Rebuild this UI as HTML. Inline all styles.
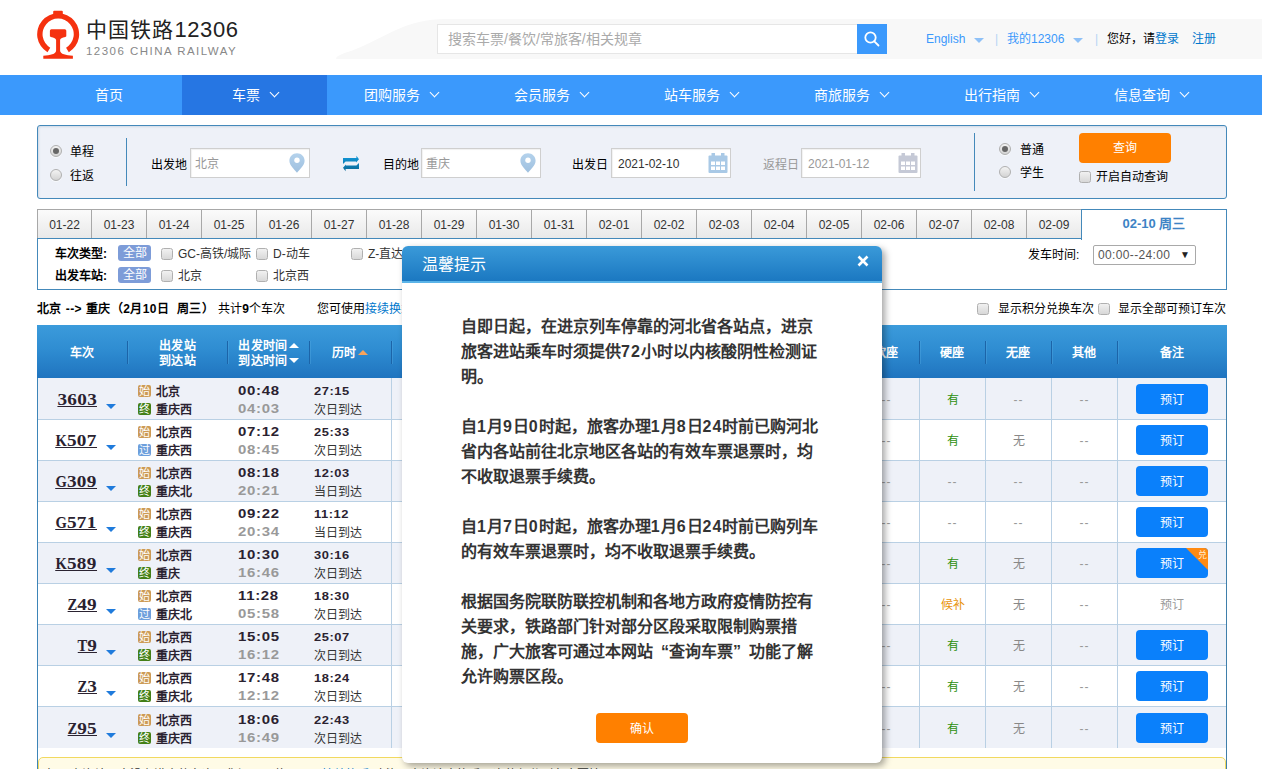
<!DOCTYPE html>
<html lang="zh-CN">
<head>
<meta charset="utf-8">
<title>中国铁路12306</title>
<style>
*{box-sizing:border-box;margin:0;padding:0}
html,body{width:1262px;height:769px;overflow:hidden;background:#fff}
body{font-family:"Liberation Sans",sans-serif;font-size:12px;color:#000;position:relative}
a{text-decoration:none;color:#0077cc}
.abs{position:absolute}
/* header */
#hdbg{position:absolute;left:336px;top:19px;width:926px;height:40px}
#logo{position:absolute;left:30px;top:5px;width:60px;height:60px}
#lt1{position:absolute;left:86px;top:15px;font-size:22px;line-height:30px;color:#222;white-space:nowrap;letter-spacing:0px}
#lt2{position:absolute;left:86px;top:44px;font-size:11.5px;line-height:14px;color:#888;white-space:nowrap;letter-spacing:1.47px}
#sinp{position:absolute;left:437px;top:24px;width:421px;height:30px;border:1px solid #e6e6e6;background:#fff;color:#aaa;font-size:14px;line-height:28px;padding-left:10px;white-space:nowrap}
#sbtn{position:absolute;left:857px;top:24px;width:30px;height:30px;background:#3b99fc}
.hl{position:absolute;top:31px;font-size:12px;line-height:16px;white-space:nowrap;color:#3b99fc}
.caret{display:inline-block;width:0;height:0;border-left:5px solid transparent;border-right:5px solid transparent;border-top:5px solid #8fc1f7;vertical-align:middle;margin-left:9px;position:relative;top:1px}
/* nav */
#nav{position:absolute;left:0;top:75px;width:1262px;height:40px;background:#3b99fc}
.ni{position:absolute;top:0;height:40px;line-height:40px;color:#fff;font-size:14px;font-weight:500;text-align:center;white-space:nowrap}
.ni.on{background:#2676e3}
.chev{display:inline-block;width:7px;height:7px;border-right:1.7px solid #fff;border-bottom:1.7px solid #fff;transform:rotate(45deg);margin-left:11px;position:relative;top:-4px}

/* search */
#sbox{position:absolute;left:37px;top:125px;width:1190px;height:74px;border:1px solid #4489ba;border-radius:3px;background:#eef1f8;box-shadow:inset 1px 1px 2px rgba(120,150,180,.25)}
.vl{position:absolute;width:1px;background:#4489ba}
.radio{position:absolute;width:12px;height:12px;border-radius:50%;border:1px solid #b0b0b0;background:linear-gradient(#f3f3f3,#d3d3d3);box-shadow:0 1px 0 rgba(255,255,255,.6)}
.radio.on::after{content:"";position:absolute;left:2px;top:2px;width:6px;height:6px;border-radius:50%;background:#666}
.cb{position:absolute;width:12px;height:12px;margin-top:.5px;border-radius:2.5px;border:1px solid #b0b0b0;background:linear-gradient(#f1f1f1,#d8d8d8)}
.lb{position:absolute;font-size:12px;line-height:16px;white-space:nowrap;color:#000;font-weight:500;margin-top:1px}
.inp{position:absolute;top:148px;width:120px;height:30px;border:1px solid #cfcfcf;background:#fff;box-shadow:inset 1px 1px 1px rgba(0,0,0,.06);font-size:12px;line-height:30px;padding-left:6px;color:#999;white-space:nowrap}
#qbtn{position:absolute;left:1079px;top:133px;width:92px;height:30px;border-radius:4px;background:#ff8000;color:#fff;font-size:12px;line-height:30px;text-align:center}
/* tabs */
.tab{position:absolute;top:209px;width:56px;height:30px;border:1px solid #a8a8a8;border-bottom:1px solid #4489ba;background:linear-gradient(#fbfbfb,#e9e9e9);font-size:12px;line-height:31px;text-align:center;color:#333}
#tabon{position:absolute;left:1081px;top:209px;width:146px;height:31px;border:1px solid #4489ba;border-bottom:none;background:#fff;font-size:13px;font-weight:bold;line-height:28px;text-align:center;color:#3d83c5;z-index:2}
#fbox{position:absolute;left:37px;top:238px;width:1190px;height:52px;border:1px solid #4489ba;background:#fff}
.badge{position:absolute;left:118px;width:33px;height:16px;border-radius:3px;background:#7d9cd8;color:#fff;font-size:12px;line-height:16px;text-align:center}
#sel{position:absolute;left:1093px;top:245px;width:103px;height:20px;border:1px solid #a9a9a9;border-radius:2px;background:#fff;font-size:12px;line-height:18px;padding-left:4px;color:#555;letter-spacing:.35px;white-space:nowrap}

/* table */
#wrapL{position:absolute;left:37px;top:325px;width:1px;height:444px;background:#3d85b8}
#wrapR{position:absolute;left:1226px;top:325px;width:1px;height:444px;background:#3f7fab}
#th{position:absolute;left:37px;top:325px;width:1190px;height:53px;background:linear-gradient(#3b9bdb 0%,#2f8dd2 45%,#1f74bf 100%)}
.thc{position:absolute;top:0;height:53px;color:#fff;font-weight:bold;font-size:12px;letter-spacing:.3px;text-align:center;white-space:nowrap;display:flex;align-items:center;justify-content:center;line-height:15px;padding-top:4px}
.ths{position:absolute;top:16px;width:2px;height:23px;border-left:1px solid #1c64a8;border-right:1px solid rgba(90,175,230,.35)}
.row{position:absolute;left:38px;width:1188px;height:41px;border-bottom:1px solid #b9d0e4;background:#fff}
.row.odd{background:#eef1f8}
.tn{position:absolute;right:1129px;bottom:12px;font-family:"Liberation Serif",serif;font-weight:bold;font-size:17px;line-height:14px;height:14.5px;letter-spacing:.3px;color:#2a2230;text-decoration:none;border-bottom:1.5px solid #2a2230;white-space:nowrap;transform:scaleX(1.13);transform-origin:100% 50%}
.tn span{display:inline-block;transform:scaleX(.76);transform-origin:100% 50%;margin-left:-3.2px}
.tri{position:absolute;left:68px;bottom:10px;width:0;height:0;border-left:5px solid transparent;border-right:5px solid transparent;border-top:5px solid #1f7bdc}
.si{position:absolute;left:100px;width:13px;height:12px;border-radius:2px;color:#fff;font-size:11px;line-height:12px;text-align:center;overflow:hidden}
.si.s{background:#cc9a55}.si.z{background:#437f17}.si.g{background:#6d9fdc}
.sn{position:absolute;left:118px;font-size:12px;font-weight:bold;line-height:16px;color:#2a2230;white-space:nowrap}
.t1{position:absolute;left:200px;bottom:19px;font-size:13px;font-weight:bold;line-height:18px;letter-spacing:.6px;transform:scaleX(1.15);transform-origin:0 50%;color:#2a2230;white-space:nowrap}
.t2{position:absolute;left:200px;bottom:1px;font-size:13px;font-weight:bold;line-height:18px;letter-spacing:.6px;transform:scaleX(1.15);transform-origin:0 50%;color:#999;white-space:nowrap}
.d1{position:absolute;left:276px;bottom:20px;font-size:11.5px;font-weight:bold;line-height:16px;letter-spacing:.5px;transform:scaleX(1.12);transform-origin:0 50%;color:#2a2230;white-space:nowrap}
.d2{position:absolute;left:275.5px;bottom:1px;font-size:12px;line-height:16px;color:#333;white-space:nowrap}
.c{position:absolute;bottom:0;width:66px;height:41px;border-left:1px solid #b9d0e4;text-align:center;font-size:12px;line-height:44px;color:#999;letter-spacing:1px;white-space:nowrap}
.c.y{color:#2c8f0c;letter-spacing:0}.c.h{color:#e8930c;letter-spacing:0}.c.n{color:#888;letter-spacing:0}
.bk{position:absolute;left:1098px;bottom:5px;width:72px;height:30px;border-radius:4px;background:#0a80fb;color:#fff;font-size:12px;line-height:32px;text-align:center;overflow:hidden}
.bkx{position:absolute;left:1098px;bottom:5px;width:72px;height:30px;color:#999;font-size:12px;line-height:32px;text-align:center}
#tip{position:absolute;left:38px;top:757px;width:1188px;height:40px;border:1px solid #f1d95f;border-radius:5px;background:#fffbe6;font-size:12px;line-height:16px;padding:9px 0 0 7px;color:#333;white-space:nowrap}
/* modal */
#modal{position:absolute;left:402px;top:246px;width:480px;height:517px;border-radius:6px;background:#fff;box-shadow:3px 3px 7px rgba(0,0,0,.36);z-index:10}
#mh{position:absolute;left:0;top:0;width:480px;height:37px;border-radius:6px 6px 0 0;background:linear-gradient(#3a9ad9,#1b78c1);border-bottom:2px solid #5bb4e8;color:#fff;font-size:16px;line-height:37px;padding-left:20px;font-weight:300}
#mx{position:absolute;left:455px;top:9px}
#mb{position:absolute;left:59px;top:68px;width:400px;font-size:16px;font-weight:bold;line-height:25px;color:#333;white-space:nowrap}
#mb p{margin-bottom:25px}
.dg{letter-spacing:1px}
.q{display:inline-block;width:16px;text-align:left}
#ok{position:absolute;left:194px;top:467px;width:92px;height:30px;border-radius:4px;background:#ff8000;color:#fff;font-size:12px;line-height:33px;text-align:center}
.up,.dn{display:inline-block;width:0;height:0;border-left:5px solid transparent;border-right:5px solid transparent;margin-left:1px;vertical-align:middle;position:relative;top:-1px}
.up{border-bottom:5px solid #fff}.dn{border-top:5px solid #fff}.up.o{border-bottom-color:#f9a35a}
</style>
</head>
<body>
<svg width="0" height="0" style="position:absolute"><defs><linearGradient id="pg" x1="0" y1="0" x2="0" y2="1"><stop offset="0" stop-color="#b4d2ec"/><stop offset="1" stop-color="#9fc0df"/></linearGradient></defs></svg>
<!-- header -->
<svg id="hdbg" viewBox="0 0 926 40" preserveAspectRatio="none"><path d="M0 40 C 0 36, 10 34, 20 30 C 50 18, 70 0, 110 0 L 926 0 L 926 40 Z" fill="#f8f8f8"/></svg>
<svg id="logo" viewBox="30 5 60 60"><path d="M47.49 52.29 A21.0 21.0 0 1 1 68.81 52.29 L66.07 47.64 A15.6 15.6 0 1 0 50.23 47.64 Z" fill="#f5310f"/><rect x="53.2" y="10.8" width="9.6" height="4" rx="1" fill="#f5310f"/><path d="M51.4 29.2 H64.8 Q66.3 29.2 66.3 30.7 V36.2 C66.3 37.2 60.1 37.6 60.1 40 V50.5 C60.1 54.2 66 55.2 72.9 55.8 V58.8 H43.3 V55.8 C50.2 55.2 56.1 54.2 56.1 50.5 V40 C56.1 37.6 49.9 37.2 49.9 36.2 V30.7 Q49.9 29.2 51.4 29.2 Z" fill="#f5310f"/></svg>
<div id="lt1"><span style="font-weight:500;font-size:21px;letter-spacing:1.1px">中国铁路</span><span style="letter-spacing:0.6px">12306</span></div>
<div id="lt2">12306 CHINA RAILWAY</div>
<div id="sinp">搜索车票/餐饮/常旅客/相关规章</div>
<div id="sbtn"><svg width="30" height="30" viewBox="0 0 30 30"><circle cx="13.500000" cy="13.500000" r="5.200000" fill="none" stroke="#fff" stroke-width="1.800000"/><path d="M17.300000 17.300000 L21.500000 21.500000" stroke="#fff" stroke-width="1.800000" stroke-linecap="round"/></svg></div>
<div class="hl" style="left:926px">English<span class="caret"></span></div>
<div class="hl" style="left:995px;color:#b5d4f5">|</div>
<div class="hl" style="left:1007px">我的12306<span class="caret"></span></div>
<div class="hl" style="left:1095px;color:#b5d4f5">|</div>
<div class="hl" style="left:1107px;color:#000">您好，请<a href="#" style="color:#0077cc">登录</a></div>
<div class="hl" style="left:1192px"><a href="#" style="color:#0077cc">注册</a></div>
<!-- nav -->
<div id="nav">
<div class="ni" style="left:37px;width:144px">首页</div>
<div class="ni on" style="left:182px;width:145px">车票<span class="chev"></span></div>
<div class="ni" style="left:326px;width:150px">团购服务<span class="chev"></span></div>
<div class="ni" style="left:476px;width:150px">会员服务<span class="chev"></span></div>
<div class="ni" style="left:626px;width:150px">站车服务<span class="chev"></span></div>
<div class="ni" style="left:776px;width:150px">商旅服务<span class="chev"></span></div>
<div class="ni" style="left:926px;width:150px">出行指南<span class="chev"></span></div>
<div class="ni" style="left:1076px;width:150px">信息查询<span class="chev"></span></div>
</div>

<div id="sbox"></div>
<div class="radio on" style="left:50px;top:145px"></div><div class="lb" style="left:70px;top:143px">单程</div>
<div class="radio" style="left:50px;top:169px"></div><div class="lb" style="left:70px;top:167px">往返</div>
<div class="vl" style="left:126px;top:138px;height:48px"></div>
<div class="lb" style="left:151px;top:156px">出发地</div>
<div class="inp" style="left:190px;padding-left:4px">北京</div><svg class="abs" style="left:289px;top:153px" width="16" height="20" viewBox="0 0 16 20"><path d="M8 0.3 C3.700000 0.3 0.4 3.600000 0.4 7.700000 C0.4 12.500000 5.500000 16.500000 8 19.700000 C10.500000 16.500000 15.600000 12.500000 15.600000 7.700000 C15.600000 3.600000 12.300000 0.3 8 0.3 Z" fill="url(#pg)"/><circle cx="8" cy="7.300000" r="2.700000" fill="#fff"/></svg>
<svg class="abs" style="left:342px;top:155px" width="18" height="17" viewBox="0 0 18 17"><defs><linearGradient id="sw" x1="0" y1="0" x2="0" y2="1"><stop offset="0" stop-color="#1299da"/><stop offset="1" stop-color="#0a6997"/></linearGradient></defs><path d="M1 3 V9 L3.6 6.4 H14 V7.4 L17 4.3 L14.4 0.8 V3 Z M17 14 V8 L14.4 10.6 H4 V9.6 L1 12.7 L3.6 16.2 V14 Z" fill="url(#sw)"/></svg>
<div class="lb" style="left:383px;top:156px">目的地</div>
<div class="inp" style="left:421px;padding-left:4px">重庆</div><svg class="abs" style="left:520px;top:153px" width="16" height="20" viewBox="0 0 16 20"><path d="M8 0.3 C3.700000 0.3 0.4 3.600000 0.4 7.700000 C0.4 12.500000 5.500000 16.500000 8 19.700000 C10.500000 16.500000 15.600000 12.500000 15.600000 7.700000 C15.600000 3.600000 12.300000 0.3 8 0.3 Z" fill="url(#pg)"/><circle cx="8" cy="7.300000" r="2.700000" fill="#fff"/></svg>
<div class="lb" style="left:572px;top:156px">出发日</div>
<div class="inp" style="left:611px;color:#333">2021-02-10</div><svg class="abs" style="left:708px;top:153px" width="20" height="20" viewBox="0 0 20 20"><rect x="0.5" y="2.5" width="19" height="17.5" rx="1" fill="#a9c9e6"/><rect x="3.5" y="0" width="3.5" height="5" fill="#a9c9e6"/><rect x="13" y="0" width="3.5" height="5" fill="#a9c9e6"/><g fill="#fff"><rect x="3" y="8.500000" width="4" height="3.500000"/><rect x="8" y="8.500000" width="4" height="3.500000"/><rect x="13" y="8.500000" width="4" height="3.500000"/><rect x="3" y="13.500000" width="4" height="3.500000"/><rect x="8" y="13.500000" width="4" height="3.500000"/><rect x="13" y="13.500000" width="4" height="3.500000"/></g></svg>
<div class="lb" style="left:763px;top:156px;color:#999;font-weight:normal">返程日</div>
<div class="inp" style="left:801px">2021-01-12</div><svg class="abs" style="left:898px;top:153px" width="20" height="20" viewBox="0 0 20 20"><rect x="0.5" y="2.5" width="19" height="17.5" rx="1" fill="#c5c9d6"/><rect x="3.5" y="0" width="3.5" height="5" fill="#c5c9d6"/><rect x="13" y="0" width="3.5" height="5" fill="#c5c9d6"/><g fill="#fff"><rect x="3" y="8.500000" width="4" height="3.500000"/><rect x="8" y="8.500000" width="4" height="3.500000"/><rect x="13" y="8.500000" width="4" height="3.500000"/><rect x="3" y="13.500000" width="4" height="3.500000"/><rect x="8" y="13.500000" width="4" height="3.500000"/><rect x="13" y="13.500000" width="4" height="3.500000"/></g></svg>
<div class="vl" style="left:974px;top:133px;height:58px"></div>
<div class="radio on" style="left:999px;top:143px"></div><div class="lb" style="left:1020px;top:141px">普通</div>
<div class="radio" style="left:999px;top:166px"></div><div class="lb" style="left:1020px;top:164px">学生</div>
<div id="qbtn">查询</div>
<div class="cb" style="left:1079px;top:170px"></div><div class="lb" style="left:1096px;top:168px">开启自动查询</div>

<div class="tab" style="left:37px;width:55px">01-22</div><div class="tab" style="left:91px">01-23</div><div class="tab" style="left:146px">01-24</div><div class="tab" style="left:201px">01-25</div><div class="tab" style="left:256px">01-26</div><div class="tab" style="left:311px">01-27</div><div class="tab" style="left:366px">01-28</div><div class="tab" style="left:421px">01-29</div><div class="tab" style="left:476px">01-30</div><div class="tab" style="left:531px">01-31</div><div class="tab" style="left:586px">02-01</div><div class="tab" style="left:641px">02-02</div><div class="tab" style="left:696px">02-03</div><div class="tab" style="left:751px">02-04</div><div class="tab" style="left:806px">02-05</div><div class="tab" style="left:861px">02-06</div><div class="tab" style="left:916px">02-07</div><div class="tab" style="left:971px">02-08</div><div class="tab" style="left:1026px">02-09</div><div id="tabon">02-10 周三</div>
<div id="fbox"></div>
<div class="lb" style="left:55px;top:245px;font-weight:bold">车次类型:</div><div class="badge" style="top:245px">全部</div>
<div class="cb" style="left:161px;top:247px"></div><div class="lb" style="left:178px;top:245px;color:#333">GC-高铁/城际</div>
<div class="cb" style="left:256px;top:247px"></div><div class="lb" style="left:273px;top:245px;color:#333">D-动车</div>
<div class="cb" style="left:351px;top:247px"></div><div class="lb" style="left:368px;top:245px;color:#333">Z-直达</div>
<div class="cb" style="left:446px;top:247px"></div><div class="lb" style="left:463px;top:245px;color:#333">T-特快</div>
<div class="cb" style="left:541px;top:247px"></div><div class="lb" style="left:558px;top:245px;color:#333">K-快速</div>
<div class="cb" style="left:636px;top:247px"></div><div class="lb" style="left:653px;top:245px;color:#333">其他</div>
<div class="lb" style="left:55px;top:267px;font-weight:bold">出发车站:</div><div class="badge" style="top:267px">全部</div>
<div class="cb" style="left:161px;top:269px"></div><div class="lb" style="left:178px;top:267px;color:#333">北京</div>
<div class="cb" style="left:256px;top:269px"></div><div class="lb" style="left:273px;top:267px;color:#333">北京西</div>
<div class="lb" style="left:1028px;top:246px">发车时间:</div>
<div id="sel">00:00--24:00<span style="position:absolute;right:5px;top:0;font-size:10px;letter-spacing:0;color:#222">&#9660;</span></div>
<div class="lb" style="left:37px;top:300px"><b style="letter-spacing:.45px;margin-right:4px">北京 --&gt; 重庆（2月10日&nbsp; 周三）</b>共计<b>9</b>个车次</div>
<div class="lb" style="left:317px;top:300px">您可使用<a href="#">接续换乘</a>功能，查询途中换乘一次的部分列车余票情况。</div>
<div class="cb" style="left:977px;top:302px"></div><div class="lb" style="left:998px;top:300px">显示积分兑换车次</div>
<div class="cb" style="left:1098px;top:302px"></div><div class="lb" style="left:1118px;top:300px">显示全部可预订车次</div>

<div id="wrapL"></div><div id="wrapR"></div><div id="th"><div class="thc" style="left:0px;width:90px"><div>车次</div></div><div class="thc" style="left:90px;width:101px"><div>出发站<br>到达站</div></div><div class="thc" style="left:191px;width:81px"><div>出发时间<span class="up"></span><br>到达时间<span class="dn"></span></div></div><div class="thc" style="left:272px;width:82px"><div>历时<span class="up o"></span></div></div><div class="thc" style="left:354px;width:66px"><div>商务座<br>特等座</div></div><div class="thc" style="left:420px;width:66px"><div>一等座</div></div><div class="thc" style="left:486px;width:66px"><div>二等座<br>二等包座</div></div><div class="thc" style="left:552px;width:66px"><div>高级<br>软卧</div></div><div class="thc" style="left:618px;width:66px"><div>软卧<br>一等卧</div></div><div class="thc" style="left:684px;width:66px"><div>动卧</div></div><div class="thc" style="left:750px;width:66px"><div>硬卧<br>二等卧</div></div><div class="thc" style="left:816px;width:66px"><div>软座</div></div><div class="thc" style="left:882px;width:66px"><div>硬座</div></div><div class="thc" style="left:948px;width:66px"><div>无座</div></div><div class="thc" style="left:1014px;width:66px"><div>其他</div></div><div class="thc" style="left:1080px;width:110px"><div>备注</div></div><div class="ths" style="left:90px"></div><div class="ths" style="left:190px"></div><div class="ths" style="left:272px"></div><div class="ths" style="left:354px"></div><div class="ths" style="left:420px"></div><div class="ths" style="left:486px"></div><div class="ths" style="left:552px"></div><div class="ths" style="left:618px"></div><div class="ths" style="left:684px"></div><div class="ths" style="left:750px"></div><div class="ths" style="left:816px"></div><div class="ths" style="left:882px"></div><div class="ths" style="left:948px"></div><div class="ths" style="left:1014px"></div><div class="ths" style="left:1080px"></div></div><div class="row odd" style="top:378px;height:42px"><a class="tn" href="#">3603</a><span class="tri"></span><span class="si s" style="bottom:22px">始</span><span class="sn" style="bottom:19px">北京</span><span class="si z" style="bottom:4px">终</span><span class="sn" style="bottom:1px">重庆西</span><span class="t1">00:48</span><span class="t2">04:03</span><span class="d1">27:15</span><span class="d2">次日到达</span><span class="c" style="left:353px">--</span><span class="c" style="left:419px">--</span><span class="c" style="left:485px">--</span><span class="c" style="left:551px">--</span><span class="c y" style="left:617px">有</span><span class="c" style="left:683px">--</span><span class="c y" style="left:749px">有</span><span class="c" style="left:815px">--</span><span class="c y" style="left:881px">有</span><span class="c" style="left:947px">--</span><span class="c" style="left:1013px">--</span><span class="c" style="left:1079px;width:2px"></span><a class="bk" href="#">预订</a></div><div class="row" style="top:420px"><a class="tn" href="#"><span>K</span>507</a><span class="tri"></span><span class="si s" style="bottom:22px">始</span><span class="sn" style="bottom:19px">北京西</span><span class="si g" style="bottom:4px">过</span><span class="sn" style="bottom:1px">重庆西</span><span class="t1">07:12</span><span class="t2">08:45</span><span class="d1">25:33</span><span class="d2">次日到达</span><span class="c" style="left:353px">--</span><span class="c" style="left:419px">--</span><span class="c" style="left:485px">--</span><span class="c" style="left:551px">--</span><span class="c y" style="left:617px">有</span><span class="c" style="left:683px">--</span><span class="c y" style="left:749px">有</span><span class="c" style="left:815px">--</span><span class="c y" style="left:881px">有</span><span class="c n" style="left:947px">无</span><span class="c" style="left:1013px">--</span><span class="c" style="left:1079px;width:2px"></span><a class="bk" href="#">预订</a></div><div class="row odd" style="top:461px"><a class="tn" href="#"><span>G</span>309</a><span class="tri"></span><span class="si s" style="bottom:22px">始</span><span class="sn" style="bottom:19px">北京西</span><span class="si z" style="bottom:4px">终</span><span class="sn" style="bottom:1px">重庆北</span><span class="t1">08:18</span><span class="t2">20:21</span><span class="d1">12:03</span><span class="d2">当日到达</span><span class="c y" style="left:353px">5</span><span class="c y" style="left:419px">有</span><span class="c y" style="left:485px">有</span><span class="c" style="left:551px">--</span><span class="c" style="left:617px">--</span><span class="c" style="left:683px">--</span><span class="c" style="left:749px">--</span><span class="c" style="left:815px">--</span><span class="c" style="left:881px">--</span><span class="c" style="left:947px">--</span><span class="c" style="left:1013px">--</span><span class="c" style="left:1079px;width:2px"></span><a class="bk" href="#">预订</a></div><div class="row" style="top:502px"><a class="tn" href="#"><span>G</span>571</a><span class="tri"></span><span class="si s" style="bottom:22px">始</span><span class="sn" style="bottom:19px">北京西</span><span class="si z" style="bottom:4px">终</span><span class="sn" style="bottom:1px">重庆西</span><span class="t1">09:22</span><span class="t2">20:34</span><span class="d1">11:12</span><span class="d2">当日到达</span><span class="c y" style="left:353px">8</span><span class="c y" style="left:419px">有</span><span class="c y" style="left:485px">有</span><span class="c" style="left:551px">--</span><span class="c" style="left:617px">--</span><span class="c" style="left:683px">--</span><span class="c" style="left:749px">--</span><span class="c" style="left:815px">--</span><span class="c" style="left:881px">--</span><span class="c" style="left:947px">--</span><span class="c" style="left:1013px">--</span><span class="c" style="left:1079px;width:2px"></span><a class="bk" href="#">预订</a></div><div class="row odd" style="top:543px"><a class="tn" href="#"><span>K</span>589</a><span class="tri"></span><span class="si s" style="bottom:22px">始</span><span class="sn" style="bottom:19px">北京西</span><span class="si z" style="bottom:4px">终</span><span class="sn" style="bottom:1px">重庆</span><span class="t1">10:30</span><span class="t2">16:46</span><span class="d1">30:16</span><span class="d2">次日到达</span><span class="c" style="left:353px">--</span><span class="c" style="left:419px">--</span><span class="c" style="left:485px">--</span><span class="c" style="left:551px">--</span><span class="c y" style="left:617px">有</span><span class="c" style="left:683px">--</span><span class="c y" style="left:749px">有</span><span class="c" style="left:815px">--</span><span class="c y" style="left:881px">有</span><span class="c n" style="left:947px">无</span><span class="c" style="left:1013px">--</span><span class="c" style="left:1079px;width:2px"></span><a class="bk" href="#">预订<svg style="position:absolute;right:0;top:0" width="22" height="22" viewBox="0 0 22 22"><path d="M0 0 H22 V22 Z" fill="#ff8a12"/></svg><span style="position:absolute;right:1px;top:1px;font-size:9px;line-height:12px;color:#fff0d6">兑</span></a></div><div class="row" style="top:584px"><a class="tn" href="#"><span>Z</span>49</a><span class="tri"></span><span class="si s" style="bottom:22px">始</span><span class="sn" style="bottom:19px">北京西</span><span class="si g" style="bottom:4px">过</span><span class="sn" style="bottom:1px">重庆北</span><span class="t1">11:28</span><span class="t2">05:58</span><span class="d1">18:30</span><span class="d2">次日到达</span><span class="c" style="left:353px">--</span><span class="c" style="left:419px">--</span><span class="c" style="left:485px">--</span><span class="c" style="left:551px">--</span><span class="c h" style="left:617px">候补</span><span class="c" style="left:683px">--</span><span class="c h" style="left:749px">候补</span><span class="c" style="left:815px">--</span><span class="c h" style="left:881px">候补</span><span class="c n" style="left:947px">无</span><span class="c" style="left:1013px">--</span><span class="c" style="left:1079px;width:2px"></span><span class="bkx">预订</span></div><div class="row odd" style="top:625px"><a class="tn" href="#"><span>T</span>9</a><span class="tri"></span><span class="si s" style="bottom:22px">始</span><span class="sn" style="bottom:19px">北京西</span><span class="si z" style="bottom:4px">终</span><span class="sn" style="bottom:1px">重庆西</span><span class="t1">15:05</span><span class="t2">16:12</span><span class="d1">25:07</span><span class="d2">次日到达</span><span class="c" style="left:353px">--</span><span class="c" style="left:419px">--</span><span class="c" style="left:485px">--</span><span class="c y" style="left:551px">6</span><span class="c y" style="left:617px">有</span><span class="c" style="left:683px">--</span><span class="c y" style="left:749px">有</span><span class="c" style="left:815px">--</span><span class="c y" style="left:881px">有</span><span class="c n" style="left:947px">无</span><span class="c" style="left:1013px">--</span><span class="c" style="left:1079px;width:2px"></span><a class="bk" href="#">预订</a></div><div class="row" style="top:666px"><a class="tn" href="#"><span>Z</span>3</a><span class="tri"></span><span class="si s" style="bottom:22px">始</span><span class="sn" style="bottom:19px">北京西</span><span class="si z" style="bottom:4px">终</span><span class="sn" style="bottom:1px">重庆北</span><span class="t1">17:48</span><span class="t2">12:12</span><span class="d1">18:24</span><span class="d2">次日到达</span><span class="c" style="left:353px">--</span><span class="c" style="left:419px">--</span><span class="c" style="left:485px">--</span><span class="c y" style="left:551px">3</span><span class="c y" style="left:617px">有</span><span class="c" style="left:683px">--</span><span class="c y" style="left:749px">有</span><span class="c" style="left:815px">--</span><span class="c y" style="left:881px">有</span><span class="c n" style="left:947px">无</span><span class="c" style="left:1013px">--</span><span class="c" style="left:1079px;width:2px"></span><a class="bk" href="#">预订</a></div><div class="row odd" style="top:707px;border-bottom:none"><a class="tn" href="#"><span>Z</span>95</a><span class="tri"></span><span class="si s" style="bottom:22px">始</span><span class="sn" style="bottom:19px">北京西</span><span class="si z" style="bottom:4px">终</span><span class="sn" style="bottom:1px">重庆西</span><span class="t1">18:06</span><span class="t2">16:49</span><span class="d1">22:43</span><span class="d2">次日到达</span><span class="c" style="left:353px">--</span><span class="c" style="left:419px">--</span><span class="c" style="left:485px">--</span><span class="c" style="left:551px">--</span><span class="c y" style="left:617px">有</span><span class="c" style="left:683px">--</span><span class="c y" style="left:749px">有</span><span class="c" style="left:815px">--</span><span class="c y" style="left:881px">有</span><span class="c n" style="left:947px">无</span><span class="c" style="left:1013px">--</span><span class="c" style="left:1079px;width:2px"></span><a class="bk" href="#">预订</a></div><div id="tip">如果查询结果中没有满意的车次，您还可以使用<a href="#" style="margin-left:24px">接续换乘</a> 功能，查询途中换乘一次的部分列车余票情况。</div>
<div id="modal"><div id="mh">温馨提示</div>
<svg id="mx" width="12" height="12" viewBox="0 0 12 12"><path d="M1.500000 1.500000 L10.500000 10.500000 M10.500000 1.500000 L1.500000 10.500000" stroke="#fff" stroke-width="2.600000"/></svg>
<div id="mb"><p>自即日起，在进京列车停靠的河北省各站点，进京<br>旅客进站乘车时须提供<span class="dg">72</span>小时以内核酸阴性检测证<br>明。</p>
<p>自<span class="dg">1</span>月<span class="dg">9</span>日<span class="dg">0</span>时起，旅客办理<span class="dg">1</span>月<span class="dg">8</span>日<span class="dg">24</span>时前已购河北<br>省内各站前往北京地区各站的有效车票退票时，均<br>不收取退票手续费。</p>
<p>自<span class="dg">1</span>月<span class="dg">7</span>日<span class="dg">0</span>时起，旅客办理<span class="dg">1</span>月<span class="dg">6</span>日<span class="dg">24</span>时前已购列车<br>的有效车票退票时，均不收取退票手续费。</p>
<p>根据国务院联防联控机制和各地方政府疫情防控有<br>关要求，铁路部门针对部分区段采取限制购票措<br>施，广大旅客可通过本网站<span class="q" style="text-align:right">“</span>查询车票<span class="q">”</span>功能了解<br>允许购票区段。</p></div>
<a id="ok" href="#">确认</a></div>
</body>
</html>
